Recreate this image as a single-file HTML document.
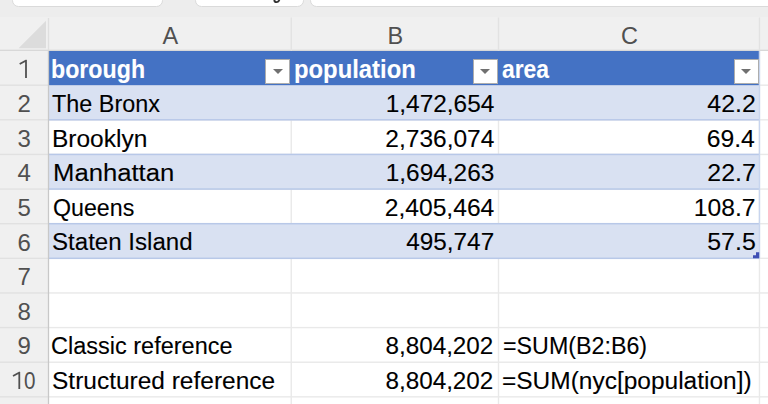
<!DOCTYPE html>
<html><head><meta charset="utf-8"><style>
html,body{margin:0;padding:0;}
body{width:768px;height:404px;overflow:hidden;position:relative;background:#ededed;font-family:"Liberation Sans",sans-serif;}
.a{position:absolute;}
.tab{position:absolute;top:-20px;height:26.5px;background:#fff;border:1px solid #dadada;border-radius:0 0 6.5px 6.5px;box-sizing:border-box;}
.t{position:absolute;white-space:nowrap;line-height:1;-webkit-text-stroke:0.1px currentColor;}
.L{transform-origin:0 0;}
.R{transform-origin:100% 0;}
.dd{position:absolute;width:25px;height:25.5px;background:#fff;box-sizing:border-box;border:1px solid #adadad;}
.dd:after{content:"";position:absolute;left:6.5px;top:9.5px;border-left:5px solid transparent;border-right:5px solid transparent;border-top:5.5px solid #707070;}
</style></head><body>
<div class="tab" style="left:11.8px;width:151.7px;"></div>
<div class="tab" style="left:195px;width:108.5px;"></div>
<svg class="a" style="left:270px;top:0" width="14" height="6"><path d="M274.2,0 Q274.6,2.3 276.8,2.1 Q278.6,1.9 279.4,0" transform="translate(-270,0)" stroke="#333" stroke-width="1.9" fill="none"/></svg>
<div class="tab" style="left:309.5px;width:480px;"></div>
<svg class="a" style="left:0;top:0" width="768" height="404"><rect x="0" y="17" width="768" height="387" fill="#f0f0f0"/><rect x="48.5" y="50.6" width="719.5" height="353.4" fill="#fff"/><polygon points="18.6,48.3 46,48.3 46,20.8" fill="#dcdcdc"/><rect x="0" y="49.7" width="768" height="1.3" fill="#d8d8d8"/><rect x="290.55" y="17.5" width="1.4" height="32.2" fill="#e2e2e2"/><rect x="497.8" y="17.5" width="1.4" height="32.2" fill="#e2e2e2"/><rect x="758.75" y="17.5" width="1.4" height="32.2" fill="#e2e2e2"/><rect x="0" y="84.47" width="48.5" height="1.4" fill="#e1e1e1"/><rect x="48.5" y="84.47" width="719.5" height="1.4" fill="#e9e9e9"/><rect x="0" y="119.10" width="48.5" height="1.4" fill="#e1e1e1"/><rect x="48.5" y="119.10" width="719.5" height="1.4" fill="#e9e9e9"/><rect x="0" y="153.73" width="48.5" height="1.4" fill="#e1e1e1"/><rect x="48.5" y="153.73" width="719.5" height="1.4" fill="#e9e9e9"/><rect x="0" y="188.36" width="48.5" height="1.4" fill="#e1e1e1"/><rect x="48.5" y="188.36" width="719.5" height="1.4" fill="#e9e9e9"/><rect x="0" y="222.99" width="48.5" height="1.4" fill="#e1e1e1"/><rect x="48.5" y="222.99" width="719.5" height="1.4" fill="#e9e9e9"/><rect x="0" y="257.62" width="48.5" height="1.4" fill="#e1e1e1"/><rect x="48.5" y="257.62" width="719.5" height="1.4" fill="#e9e9e9"/><rect x="0" y="292.25" width="48.5" height="1.4" fill="#e1e1e1"/><rect x="48.5" y="292.25" width="719.5" height="1.4" fill="#e9e9e9"/><rect x="0" y="326.88" width="48.5" height="1.4" fill="#e1e1e1"/><rect x="48.5" y="326.88" width="719.5" height="1.4" fill="#e9e9e9"/><rect x="0" y="361.51" width="48.5" height="1.4" fill="#e1e1e1"/><rect x="48.5" y="361.51" width="719.5" height="1.4" fill="#e9e9e9"/><rect x="0" y="396.14" width="48.5" height="1.4" fill="#e1e1e1"/><rect x="48.5" y="396.14" width="719.5" height="1.4" fill="#e9e9e9"/><rect x="290.55" y="50.6" width="1.4" height="353.4" fill="#e9e9e9"/><rect x="497.8" y="50.6" width="1.4" height="353.4" fill="#e9e9e9"/><rect x="758.75" y="50.6" width="1.4" height="353.4" fill="#e9e9e9"/><rect x="48.5" y="51" width="710.95" height="34.45" fill="#4472c4"/><rect x="48.5" y="85.45" width="710.95" height="34.35" fill="#d9e1f2"/><rect x="48.5" y="154.43" width="710.95" height="34.63" fill="#d9e1f2"/><rect x="48.5" y="223.69" width="710.95" height="34.63" fill="#d9e1f2"/><rect x="48.5" y="119.05" width="710.95" height="1.5" fill="#b8c8e8"/><rect x="48.5" y="153.68" width="710.95" height="1.5" fill="#b8c8e8"/><rect x="48.5" y="188.31" width="710.95" height="1.5" fill="#b8c8e8"/><rect x="48.5" y="222.94" width="710.95" height="1.5" fill="#b8c8e8"/><rect x="48.5" y="257.57" width="710.95" height="1.5" fill="#b8c8e8"/><rect x="758.75" y="51" width="1.4" height="207.32" fill="#c8d5ee"/><rect x="47.85" y="50.6" width="1.3" height="353.4" fill="#c8c8c8"/><rect x="47.85" y="18" width="1.3" height="32.5" fill="#dfdfdf"/><path d="M756,252.2H759.2V258.3H753V255.2H756Z" fill="#3f4fb4"/></svg>
<div class="t L" style="left:51.47px;top:57.13px;font-size:25px;color:#fff;font-weight:bold;transform:scaleX(0.9279);">borough</div>
<div class="t L" style="left:294.49px;top:57.13px;font-size:25px;color:#fff;font-weight:bold;transform:scaleX(0.9534);">population</div>
<div class="t L" style="left:502.48px;top:57.13px;font-size:25px;color:#fff;font-weight:bold;transform:scaleX(0.9131);">area</div>
<div class="t L" style="left:51.65px;top:93.00px;font-size:23px;color:#000;transform:scaleX(1.0165);">The Bronx</div>
<div class="t R" style="right:273.94px;top:93.00px;font-size:23px;color:#000;transform:scaleX(1.0611);">1,472,654</div>
<div class="t R" style="right:11.86px;top:93.00px;font-size:23px;color:#000;transform:scaleX(1.0814);">42.2</div>
<div class="t L" style="left:51.74px;top:127.57px;font-size:23px;color:#000;transform:scaleX(1.0651);">Brooklyn</div>
<div class="t R" style="right:273.94px;top:127.57px;font-size:23px;color:#000;transform:scaleX(1.0650);">2,736,074</div>
<div class="t R" style="right:12.93px;top:127.57px;font-size:23px;color:#000;transform:scaleX(1.0747);">69.4</div>
<div class="t L" style="left:52.63px;top:162.14px;font-size:23px;color:#000;transform:scaleX(1.1158);">Manhattan</div>
<div class="t R" style="right:273.86px;top:162.14px;font-size:23px;color:#000;transform:scaleX(1.0615);">1,694,263</div>
<div class="t R" style="right:12.52px;top:162.14px;font-size:23px;color:#000;transform:scaleX(1.0823);">22.7</div>
<div class="t L" style="left:52.66px;top:196.71px;font-size:23px;color:#000;transform:scaleX(1.0087);">Queens</div>
<div class="t R" style="right:273.68px;top:196.71px;font-size:23px;color:#000;transform:scaleX(1.0715);">2,405,464</div>
<div class="t R" style="right:12.49px;top:196.71px;font-size:23px;color:#000;transform:scaleX(1.0717);">108.7</div>
<div class="t L" style="left:51.64px;top:231.28px;font-size:23px;color:#000;transform:scaleX(1.0475);">Staten Island</div>
<div class="t R" style="right:274.07px;top:231.28px;font-size:23px;color:#000;transform:scaleX(1.0564);">495,747</div>
<div class="t R" style="right:12.47px;top:231.28px;font-size:23px;color:#000;transform:scaleX(1.0834);">57.5</div>
<div class="t L" style="left:51.26px;top:334.99px;font-size:23px;color:#000;transform:scaleX(1.0216);">Classic reference</div>
<div class="t R" style="right:274.40px;top:334.99px;font-size:23px;color:#000;transform:scaleX(1.0543);">8,804,202</div>
<div class="t L" style="left:502.67px;top:334.99px;font-size:23px;color:#000;transform:scaleX(1.0112);">=SUM(B2:B6)</div>
<div class="t L" style="left:51.61px;top:369.56px;font-size:23px;color:#000;transform:scaleX(1.0642);">Structured reference</div>
<div class="t R" style="right:274.40px;top:369.56px;font-size:23px;color:#000;transform:scaleX(1.0543);">8,804,202</div>
<div class="t L" style="left:501.60px;top:369.56px;font-size:23px;color:#000;transform:scaleX(1.0642);">=SUM(nyc[population])</div>
<div class="t" style="left:70.25px;width:200px;text-align:center;top:25.00px;font-size:23.5px;color:#505050;-webkit-text-stroke:0;">A</div>
<div class="t" style="left:295.35px;width:200px;text-align:center;top:25.00px;font-size:23.5px;color:#505050;-webkit-text-stroke:0;">B</div>
<div class="t" style="left:529.5px;width:200px;text-align:center;top:25.00px;font-size:23.5px;color:#505050;-webkit-text-stroke:0;">C</div>
<svg class="a" style="left:0;top:0" width="48" height="404"><path d="M26.00,77.90V60.00M26.60,60.30L19.70,64.00" stroke="#505050" stroke-width="1.8" fill="none"/></svg>
<div class="t" style="left:-75.85px;width:200px;text-align:center;top:92.25px;font-size:24px;color:#505050;-webkit-text-stroke:0;">2</div>
<div class="t" style="left:-75.85px;width:200px;text-align:center;top:126.82px;font-size:24px;color:#505050;-webkit-text-stroke:0;">3</div>
<div class="t" style="left:-75.85px;width:200px;text-align:center;top:161.39px;font-size:24px;color:#505050;-webkit-text-stroke:0;">4</div>
<div class="t" style="left:-75.85px;width:200px;text-align:center;top:195.96px;font-size:24px;color:#505050;-webkit-text-stroke:0;">5</div>
<div class="t" style="left:-75.85px;width:200px;text-align:center;top:230.53px;font-size:24px;color:#505050;-webkit-text-stroke:0;">6</div>
<div class="t" style="left:-75.85px;width:200px;text-align:center;top:265.10px;font-size:24px;color:#505050;-webkit-text-stroke:0;">7</div>
<div class="t" style="left:-75.85px;width:200px;text-align:center;top:299.67px;font-size:24px;color:#505050;-webkit-text-stroke:0;">8</div>
<div class="t" style="left:-75.85px;width:200px;text-align:center;top:334.24px;font-size:24px;color:#505050;-webkit-text-stroke:0;">9</div>
<svg class="a" style="left:0;top:0" width="48" height="404"><path d="M19.30,389.03V371.93M19.90,372.23L13.00,375.93" stroke="#505050" stroke-width="1.8" fill="none"/></svg>
<div class="t L" style="left:23.6px;top:368.81px;font-size:24px;color:#505050;-webkit-text-stroke:0;transform:scaleX(0.86);">0</div>
<div class="dd" style="left:265.20px;top:58.7px;"></div>
<div class="dd" style="left:472.50px;top:58.7px;"></div>
<div class="dd" style="left:733.50px;top:58.7px;"></div>
</body></html>
